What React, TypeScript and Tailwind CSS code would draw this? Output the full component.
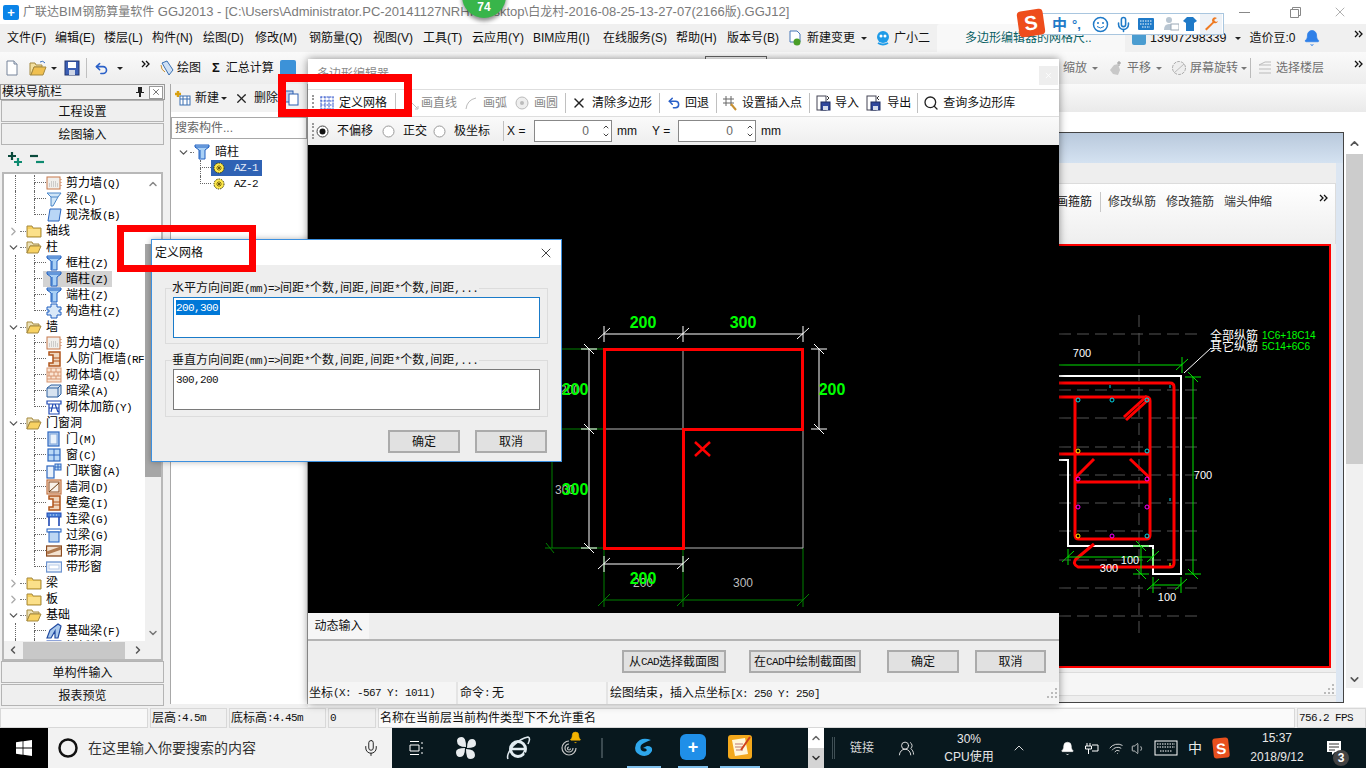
import React from "react";
import { X, Search, Mic, Bell, Volume1, Wifi, ChevronUp, ChevronDown, ChevronLeft, ChevronRight, Undo2, UsersRound } from "lucide-react";

const M = ({ t }: { t: string }) => (
  <>
    {t.split(/([\x00-\x7f]+)/).map((s, i) =>
      /^[\x00-\x7f]+$/.test(s) ? (
        <span key={i} className="font-['Liberation_Mono',monospace] text-[11px] tracking-[-0.6px]">{s}</span>
      ) : (
        <React.Fragment key={i}>{s}</React.Fragment>
      )
    )}
  </>
);

const Ico = ({ children, s = 16, vb = 16, className = "" }: { children: React.ReactNode; s?: number; vb?: number; className?: string }) => (
  <svg width={s} height={s} viewBox={`0 0 ${vb} ${vb}`} className={"shrink-0 block " + className}>{children}</svg>
);

const FolderClosed = () => (
  <Ico>
    <path d="M1 3h5l1 2h8v9H1z" fill="#f6cf5c" stroke="#a5893f" />
    <rect x="2" y="6" width="12" height="7" fill="#fbe08a" />
  </Ico>
);
const FolderOpen = () => (
  <Ico>
    <path d="M1 3h5l1 2h6v2H4l-3 7z" fill="#ede2b8" stroke="#a5893f" />
    <path d="M1 14l3-7h11l-3 7z" fill="#f8d263" stroke="#a5893f" />
  </Ico>
);
const TCol = () => (
  <Ico>
    <path d="M1 1h14v2l-4 3v9H5V6L1 3z" fill="#a9d0f5" stroke="#1f5fc0" />
    <path d="M6 6v8M1 3h14" stroke="#1f5fc0" fill="none" />
  </Ico>
);
const Wall = () => (
  <Ico>
    <rect x="1" y="2" width="13" height="12" fill="#f1efec" stroke="#c8784a" />
    <path d="M3 11h9M3 9h9M5 7h6" stroke="#a9a9a9" strokeDasharray="1 1" />
    <path d="M15 4v1M15 7v1M15 10v1" stroke="#c8784a" />
  </Ico>
);
const Beam = () => (
  <Ico>
    <path d="M1 2h14l-3 4-5 9H5V6z" fill="#cfe5f7" stroke="#4a86c8" />
    <path d="M5 6h7" stroke="#4a86c8" />
  </Ico>
);
const Slab = () => (
  <Ico><path d="M4 2h11l-2 12H2z" fill="#b9d6f6" stroke="#2c66bf" /></Ico>
);
const Puzzle = () => (
  <Ico>
    <path d="M5 1h6v3h4v3h-2v2h2v3h-4v3H5v-3H1V9h2V7H1V4h4z" fill="#d9e8f8" stroke="#1f5fc0" />
  </Ico>
);
const Jamb = () => (
  <Ico>
    <path d="M3 1h11v14H3v-3h4V4H3z" fill="#f0d7bf" stroke="#b0551c" strokeWidth="1.5" />
    <path d="M7 7h7M7 10h7" stroke="#b0551c" />
  </Ico>
);
const Brick = () => (
  <Ico>
    <rect x="1" y="1" width="14" height="14" fill="#fbe5d3" stroke="#d69570" />
    <path d="M1 5h14M1 9h14M1 12h14M5 1v4M10 1v4M3 5v4M8 5v4M12 5v4M5 9v3M10 9v3" stroke="#d69570" />
  </Ico>
);
const Box = () => (
  <Ico>
    <path d="M1 5l4-3h10v9l-3 3H1z" fill="#d7e3f0" stroke="#2c5f9e" />
    <path d="M1 5h11v9M12 5l3-3" stroke="#2c5f9e" fill="none" />
  </Ico>
);
const RebarBox = () => (
  <Ico>
    <path d="M1 2h14v3H1zM3 5v10h10V5M3 9h10M7 5l-2 8M9 5l3 8" fill="none" stroke="#1f49b4" strokeWidth="1.2" />
  </Ico>
);
const Door = () => (
  <Ico>
    <rect x="2" y="1" width="11" height="14" fill="#b9d2f2" stroke="#2c66bf" strokeWidth="1.2" />
    <rect x="4" y="3" width="7" height="10" fill="#eaf2fb" stroke="#7fa4d8" />
  </Ico>
);
const Win = () => (
  <Ico>
    <rect x="2" y="2" width="12" height="12" fill="#b9d9f6" stroke="#2c66bf" strokeWidth="1.2" />
    <path d="M8 2v12M2 8h12" stroke="#2c66bf" />
  </Ico>
);
const DoorWin = () => (
  <Ico>
    <rect x="1" y="3" width="7" height="12" fill="#eaf2fb" stroke="#2c66bf" strokeWidth="1.2" />
    <rect x="9" y="1" width="6" height="6" fill="#b9d9f6" stroke="#2c66bf" />
    <path d="M12 1v6M9 4h6" stroke="#2c66bf" />
  </Ico>
);
const Hole = () => (
  <Ico>
    <rect x="1" y="1" width="14" height="14" fill="#fbe5d3" stroke="#c07040" strokeWidth="1.2" />
    <rect x="3" y="3" width="10" height="10" fill="#f8f0e8" stroke="#8a4a20" />
    <path d="M3 13l10-9" stroke="#6a3a10" />
  </Ico>
);
const Lintel = () => (
  <Ico>
    <rect x="1" y="2" width="14" height="4" fill="#4f86d8" stroke="#1f49b4" />
    <path d="M3 6v9M13 6v9" stroke="#1f49b4" strokeWidth="1.6" />
    <path d="M4 4h1M7 4h1M10 4h1" stroke="#cfe0f8" />
  </Ico>
);
const Lintel2 = () => (
  <Ico>
    <rect x="1" y="2" width="14" height="3" fill="#fff" stroke="#1f5fc0" />
    <rect x="3" y="5" width="10" height="10" fill="#bcd6f3" stroke="#1f5fc0" />
  </Ico>
);
const StripHole = () => (
  <Ico>
    <rect x="0.5" y="3" width="15" height="10" fill="#f4e3d1" stroke="#8a4a20" strokeWidth="1.3" />
    <path d="M1 10l14-5" stroke="#b07a50" strokeWidth="3" />
  </Ico>
);
const StripWin = () => (
  <Ico>
    <rect x="0.5" y="3" width="15" height="10" fill="#f0f5fc" stroke="#6d94d0" strokeWidth="1.3" />
    <rect x="3" y="6" width="10" height="4" fill="#fff" stroke="#b7cbe8" />
  </Ico>
);
const BaseBeam = () => (
  <Ico>
    <path d="M1 15l3-8 8-6 3 2-3 12H9V8L5 15z" fill="#a9c8ec" stroke="#1f49a0" strokeWidth="1.2" />
  </Ico>
);
const Gear = () => (
  <Ico s={14} vb={14}>
    <circle cx="7" cy="7" r="5" fill="#ffe84a" stroke="#3a3a00" strokeWidth="1" strokeDasharray="1.5 1" />
    <path d="M4 7h6M7 4v6M5 5l4 4M9 5l-4 4" stroke="#554400" strokeWidth="0.7" />
  </Ico>
);

const Expander = ({ open }: { open: boolean }) =>
  open ? <ChevronDown size={13} strokeWidth={2.4} className="text-[#555]" /> : <ChevronRight size={13} strokeWidth={2.4} className="text-[#aaa]" />;

type Node =
  | { kind: "f"; label: string; open: boolean }
  | { kind: "c"; label: string; icon: React.ReactNode; last?: boolean; sel?: boolean };

const tree: Node[] = [
  { kind: "c", label: "剪力墙(Q)", icon: <Wall /> },
  { kind: "c", label: "梁(L)", icon: <Beam /> },
  { kind: "c", label: "现浇板(B)", icon: <Slab />, last: true },
  { kind: "f", label: "轴线", open: false },
  { kind: "f", label: "柱", open: true },
  { kind: "c", label: "框柱(Z)", icon: <TCol /> },
  { kind: "c", label: "暗柱(Z)", icon: <TCol />, sel: true },
  { kind: "c", label: "端柱(Z)", icon: <TCol /> },
  { kind: "c", label: "构造柱(Z)", icon: <Puzzle />, last: true },
  { kind: "f", label: "墙", open: true },
  { kind: "c", label: "剪力墙(Q)", icon: <Wall /> },
  { kind: "c", label: "人防门框墙(RF", icon: <Jamb /> },
  { kind: "c", label: "砌体墙(Q)", icon: <Brick /> },
  { kind: "c", label: "暗梁(A)", icon: <Box /> },
  { kind: "c", label: "砌体加筋(Y)", icon: <RebarBox />, last: true },
  { kind: "f", label: "门窗洞", open: true },
  { kind: "c", label: "门(M)", icon: <Door /> },
  { kind: "c", label: "窗(C)", icon: <Win /> },
  { kind: "c", label: "门联窗(A)", icon: <DoorWin /> },
  { kind: "c", label: "墙洞(D)", icon: <Hole /> },
  { kind: "c", label: "壁龛(I)", icon: <Jamb /> },
  { kind: "c", label: "连梁(G)", icon: <Lintel /> },
  { kind: "c", label: "过梁(G)", icon: <Lintel2 /> },
  { kind: "c", label: "带形洞", icon: <StripHole /> },
  { kind: "c", label: "带形窗", icon: <StripWin />, last: true },
  { kind: "f", label: "梁", open: false },
  { kind: "f", label: "板", open: false },
  { kind: "f", label: "基础", open: true },
  { kind: "c", label: "基础梁(F)", icon: <BaseBeam /> },
  { kind: "c", label: "筏板基础(M)", icon: <Lintel /> },
];

const FolderHolder = ({ open }: { open: boolean }) => (open ? <FolderOpen /> : <FolderClosed />);

const TreeRow = ({ n }: { n: Node }) => {
  if (n.kind === "f") {
    return (
      <div className="flex h-4 items-center">
        <div className="w-[3px] shrink-0" />
        <div className="w-[13px] shrink-0"><Expander open={n.open} /></div>
        <div className="w-[6px] shrink-0 border-b border-dotted border-[#777]" />
        <FolderHolder open={n.open} />
        <span className="ml-[4px] text-black"><M t={n.label} /></span>
      </div>
    );
  }
  return (
    <div className="flex h-4 items-center">
      <div className="w-[11px] shrink-0" />
      <div className="h-4 w-[19px] shrink-0 border-l border-dotted border-[#666]" />
      <div className="flex h-4 w-[12px] shrink-0 flex-col">
        <div className="h-2 border-b border-l border-dotted border-[#666]" />
        <div className={n.last ? "h-2" : "h-2 border-l border-dotted border-[#666]"} />
      </div>
      <div className={"-ml-[3px] flex h-4 items-center pl-[3px] pr-[4px] " + (n.sel ? "bg-[#d3d3d3]" : "")}>
        {n.icon}
        <span className="ml-[4px] whitespace-nowrap leading-4 text-black"><M t={n.label} /></span>
      </div>
    </div>
  );
};

const NavBtn = ({ t }: { t: string }) => (
  <div className="mx-px flex h-[22px] shrink-0 items-center justify-center border border-[#b4b4b4] bg-[#efefef] pt-px text-[#111]">{t}</div>
);

const Sep = ({ className = "" }: { className?: string }) => <div className={"h-5 w-px shrink-0 bg-[#c0c0c0] " + className} />;
const Grip = ({ className = "" }: { className?: string }) => <div className={"h-4 w-[2px] shrink-0 border-l-2 border-dotted border-[#999] " + className} />;

const BtnBox = ({ t, className }: { t: string; className: string }) => (
  <div className={"flex h-[23px] items-center justify-center border-2 border-[#ababab] bg-[#e1e1e1] text-[#111] " + className}><M t={t} /></div>
);

const Radio = ({ on, className = "" }: { on?: boolean; className?: string }) => (
  <Ico s={13} vb={13} className={className}>
    <circle cx="6.5" cy="6.5" r="5.5" fill="#fff" stroke={on ? "#444" : "#999"} />
    {on && <circle cx="6.5" cy="6.5" r="3" fill="#111" />}
  </Ico>
);

const Spin = ({ className = "" }: { className?: string }) => (
  <div className={"flex h-[22px] w-[78px] shrink-0 items-center justify-end border border-[#888] bg-white " + className}>
    <span className="mr-[13px] text-[12px] text-[#666]">0</span>
    <span className="mr-px flex flex-col text-[#444]">
      <ChevronUp size={8} strokeWidth={3} />
      <ChevronDown size={8} strokeWidth={3} />
    </span>
  </div>
);

const vt = (x: number, y: number) => `M${x} ${y - 8}V${y + 8}M${x - 6} ${y + 5}L${x + 6} ${y - 6}`;
const ht = (x: number, y: number) => `M${x - 8} ${y}H${x + 8}M${x - 5} ${y - 5}L${x + 5} ${y + 5}`;

const PolygonCanvas = () => (
  <svg viewBox="308 145 751 468" className="block h-[468px] w-[751px] bg-black">
    <g fill="none" stroke="#008000">
      <path d="M562 349H604M562 429H604M545 548H604M552 462V548M604 548V607M683 548V607M803 548V607M604 600H803" />
      <path d="M598 606l12-12M677 606l12-12M797 606l12-12M546 543l8 10" />
    </g>
    <path d="M683 349V429M604 429H683M803 429V548M683 548H803" stroke="#b5b5b5" fill="none" />
    <g stroke="#fff" fill="none">
      <path d="M604 334H803M589 349V548M819 349V429M604 564H683" />
      <path d={[vt(604, 334), vt(683, 334), vt(803, 334), vt(604, 564), vt(683, 564), ht(589, 349), ht(589, 429), ht(589, 548), ht(819, 349), ht(819, 429)].join("")} />
    </g>
    <g fontFamily="Liberation Sans, sans-serif" fontSize="12" fill="#bdbdbd" textAnchor="middle">
      <text x="643" y="587">200</text>
      <text x="743" y="587">300</text>
      <text x="565" y="494">300</text>
      <text x="570" y="394">200</text>
    </g>
    <g fontFamily="Liberation Sans, sans-serif" fontSize="16" fontWeight="700" fill="#00ff00" textAnchor="middle">
      <text x="643" y="328">200</text>
      <text x="743" y="328">300</text>
      <text x="575" y="395">200</text>
      <text x="575" y="495">300</text>
      <text x="832" y="395">200</text>
      <text x="643" y="584">200</text>
    </g>
    <path d="M604.5 349.5H802.5V429.5H683.5V548.5H604.5Z" fill="none" stroke="#ff0000" strokeWidth="3" />
    <path d="M695 442l15 14M710 442l-15 14" stroke="#ff0000" strokeWidth="2.5" />
  </svg>
);

const dots: [number, number, string][] = [
  [1078, 400, "#00d8e8"], [1112, 400, "#00d8e8"], [1147, 400, "#00d8e8"], [1147, 451, "#00d8e8"], [1078, 451, "#ffee00"],
  [1078, 479, "#ff00ff"], [1147, 479, "#ff00ff"], [1078, 507, "#ff00ff"], [1147, 507, "#ff00ff"], [1078, 536, "#ffee00"],
  [1112, 536, "#ff00ff"], [1147, 536, "#00d8e8"],
];

const MainCanvas = () => (
  <svg viewBox="1000 246 329 420" className="block h-[420px] w-[329px] bg-black">
    <g stroke="#555" strokeDasharray="12 6" fill="none">
      <path d="M1059 334H1200M1059 390H1200M1059 418H1200M1059 447H1200M1059 475H1200M1059 503H1200M1059 531H1200M1059 560H1200M1059 588H1200M1059 616H1200M1139 315V635" />
    </g>
    <path d="M1000 376H1181V574H1153V546H1068V460H1000" fill="none" stroke="#fff" strokeWidth="2" />
    <g fill="none" stroke="#ff0000" strokeWidth="3" strokeLinejoin="round">
      <path d="M1000 383H1170Q1174 383 1174 387V563Q1174 567 1170 567H1078Q1072 564 1076 559L1094 544" />
      <path d="M1000 397H1146Q1150 397 1150 401V535Q1150 539 1146 539H1079Q1075 539 1075 535V397" />
      <path d="M1000 454H1150M1075 482H1150M1150 398L1126 420M1147 396L1124 417M1075 478L1094 459M1150 478L1130 459" />
    </g>
    <g fill="none" strokeWidth="1">
      {dots.map(([x, y, c], i) => (
        <circle key={i} cx={x} cy={y} r="2" stroke={c} />
      ))}
    </g>
    <path d="M1110 385v3M1170 385v3M1170 498v3" stroke="#00d8e8" />
    <path d="M1170 563v3" stroke="#ffee00" />
    <g fill="none" stroke="#00e000">
      <path d="M1000 365H1182M1193 377V574M1153 585H1181M1068 557H1153M1141 546V574" />
      <path d={[vt(1182, 365), vt(1153, 585), vt(1181, 585), vt(1068, 557), vt(1153, 557), ht(1193, 377), ht(1193, 574), ht(1141, 546), ht(1141, 574)].join("")} />
    </g>
    <path d="M1184 373L1211 348" stroke="#fff" />
    <g fontFamily="Liberation Sans, sans-serif" fontSize="11" fill="#fff" textAnchor="middle">
      <text x="1082" y="357">700</text>
      <text x="1203" y="479">700</text>
      <text x="1167" y="601">100</text>
      <text x="1130" y="564">100</text>
      <text x="1109" y="572">300</text>
    </g>
    <g fontFamily="Noto Sans CJK SC, sans-serif" fontSize="12" fill="#fff">
      <text x="1210" y="340">全部纵筋</text>
      <text x="1210" y="351">其它纵筋</text>
    </g>
    <g fontFamily="Liberation Sans, sans-serif" fontSize="10" fill="#00ff00">
      <text x="1262" y="339">1C6+18C14</text>
      <text x="1262" y="350">5C14+6C6</text>
    </g>
  </svg>
);

const PageIcon = () => (
  <Ico>
    <path d="M3 1h7l3 3v11H3z" fill="#fff" stroke="#77849a" />
    <path d="M10 1v3h3" fill="#dfe6f0" stroke="#77849a" />
  </Ico>
);
const OpenIcon = () => (
  <Ico s={18} vb={18}>
    <path d="M1 4h5l1 2h6v2H5l-3 8H1z" fill="#f3e0a0" stroke="#a5893f" />
    <path d="M2 16l3-8h12l-3 8z" fill="#f0c050" stroke="#a5893f" />
    <path d="M11 3q3-2 5 1" fill="none" stroke="#3a70c0" />
  </Ico>
);
const SaveIcon = () => (
  <Ico>
    <rect x="1" y="1" width="14" height="14" fill="#3c5fb4" stroke="#23366f" />
    <rect x="4" y="2" width="8" height="6" fill="#fff" />
    <rect x="5" y="10" width="6" height="5" fill="#cfd6e6" />
  </Ico>
);
const Caret = ({ c = "#222", className = "" }: { c?: string; className?: string }) => (
  <Ico s={6} vb={6} className={className}><path d="M0 2h6L3 5z" fill={c} /></Ico>
);
const More = ({ className = "" }: { className?: string }) => (
  <Ico s={10} vb={10} className={className}><path d="M1 2l3 3-3 3M5 2l3 3-3 3" fill="none" stroke="#111" strokeWidth="1.3" /></Ico>
);
const GridIcon = () => (
  <Ico s={14} vb={14}>
    <path d="M0.5 1h13M0.5 5h13M0.5 9h13M0.5 13h13M1 0.5v13M5 0.5v13M9 0.5v13M13 0.5v13" stroke="#2b4fc8" strokeDasharray="2 1" />
  </Ico>
);
const FileIO = ({ dir }: { dir: boolean }) => (
  <Ico>
    <rect x="2" y="1" width="9" height="14" fill="#fff" stroke="#445" />
    <rect x="6" y="7" width="9" height="8" fill="#30479c" stroke="#1d2a60" />
    <rect x="8" y="11" width="5" height="4" fill="#d5dcec" />
    <path d={dir ? "M12 1l2 2-2 2" : "M14 1l-2 2 2 2"} stroke="#333" fill="none" />
  </Ico>
);

const Tb = ({ t, className = "" }: { t: string; className?: string }) => <span className={"shrink-0 whitespace-nowrap text-[#111] " + className}>{t}</span>;

const menu: [string, string][] = [
  ["文件(F)", "w-[48px]"], ["编辑(E)", "w-[49px]"], ["楼层(L)", "w-[48px]"], ["构件(N)", "w-[51px]"], ["绘图(D)", "w-[52px]"],
  ["修改(M)", "w-[54px]"], ["钢筋量(Q)", "w-[64px]"], ["视图(V)", "w-[50px]"], ["工具(T)", "w-[49px]"], ["云应用(Y)", "w-[61px]"],
  ["BIM应用(I)", "w-[70px]"], ["在线服务(S)", "w-[73px]"], ["帮助(H)", "w-[51px]"], ["版本号(B)", "w-[60px]"],
];

const Taskbar = () => (
  <div className="flex h-[40px] shrink-0 items-stretch bg-[#08181e] text-[#e8e8e8]">
    <div className="flex w-[48px] shrink-0 items-center justify-center bg-black">
      <Ico s={16} vb={16}><path d="M0 2.2L6.6 1.3V7.6H0zM7.4 1.2L16 0V7.6H7.4zM0 8.4H6.6V14.7L0 13.8zM7.4 8.4H16V16L7.4 14.8z" fill="#fff" /></Ico>
    </div>
    <div className="flex w-[344px] shrink-0 items-center bg-[#f2f2f2] pl-[9px] text-[14px] text-[#333]">
      <Ico s={22} vb={22}><circle cx="11" cy="11" r="8.5" fill="none" stroke="#111" strokeWidth="2.5" /></Ico>
      <span className="ml-[9px]">在这里输入你要搜索的内容</span>
      <Mic size={18} strokeWidth={1.3} className="ml-auto mr-[12px] text-[#222]" />
    </div>
    <div className="flex w-[48px] shrink-0 items-center justify-center">
      <Ico s={16} vb={16}><path d="M2 1.5h9M2 14.5h9M2 5h9v6H2zM14 2v2M14 7v2M14 12v2" fill="none" stroke="#fff" /></Ico>
    </div>
    <div className="flex w-[52px] shrink-0 items-center justify-center">
      <Ico s={24} vb={24}>
        <g fill="#e8ecef"><path d="M12 11Q3 11 3 5q0-4 5-4 4 0 4 10zM13 12q0-9 5-9 4 0 4 5 0 4-9 4zM12 13q9 0 9 6 0 4-5 4-4 0-4-10zM11 12q0 9-5 9-4 0-4-5 0-4 9-4z" /></g>
      </Ico>
    </div>
    <div className="flex w-[52px] shrink-0 items-center justify-center">
      <Ico s={26} vb={26}>
        <path d="M3 24Q1 20 8 11 16 3 23 2q3 1 0 7" fill="none" stroke="#dfe8ee" strokeWidth="1.6" />
        <circle cx="13" cy="14" r="7.500" fill="none" stroke="#e3edf2" strokeWidth="3" />
        <path d="M6 14h14" stroke="#e3edf2" strokeWidth="2.500" />
        <path d="M19 17l4 2-3 2z" fill="#08181e" />
      </Ico>
    </div>
    <div className="relative flex w-[50px] shrink-0 items-center justify-center">
      <Ico s={18} vb={18}><path d="M9 2a7 7 0 1 0 7 7M9 5a4 4 0 1 0 4 4M9 8a1.5 1.5 0 1 0 1.5 1.5" fill="none" stroke="#c8c8c8" strokeWidth="1.2" /></Ico>
      <Bell size={13} fill="#f5b400" strokeWidth={1} className="absolute right-[12px] top-[3px] text-[#f5b400]" />
    </div>
    <div className="my-[10px] ml-[7px] mr-[16px] w-[2px] shrink-0 bg-[#3b4a50]" />
    <div className="flex w-[50px] shrink-0 flex-col items-center">
      <div className="flex flex-1 items-center">
        <Ico s={26} vb={26}><path d="M20 6Q10 2 5 10q-3 8 4 11 8 3 12-4 1-5-5-5l-4 2q3 0 4 2-2 3-6 0-2-5 3-7 4-2 7-3z" fill="#2ea7ec" /></Ico>
      </div>
      <div className="h-[2px] w-[34px] bg-[#80c0ec]" />
    </div>
    <div className="flex w-[48px] shrink-0 flex-col items-center">
      <div className="flex flex-1 items-center">
        <div className="flex h-[26px] w-[26px] items-center justify-center rounded-[6px] bg-[#1f8fe8] text-[18px] font-bold leading-none text-white">+</div>
      </div>
      <div className="h-[2px] w-[30px] bg-[#80c0ec]" />
    </div>
    <div className="flex w-[46px] shrink-0 flex-col items-center">
      <div className="flex flex-1 items-center">
        <Ico s={26} vb={26}>
          <rect x="1" y="1" width="24" height="24" rx="3" fill="#f3a81c" />
          <path d="M5 6l13-2 3 16-13 2z" fill="#fff6da" />
          <path d="M8 10h8M8 13h8M9 16h7" stroke="#b77" />
          <path d="M14 16L23 3" stroke="#d0401c" strokeWidth="2" />
        </Ico>
      </div>
      <div className="h-[2px] w-[40px] bg-[#80c0ec]" />
    </div>
    <div className="w-[45px] shrink-0" />
    <div className="flex w-[16px] shrink-0 flex-col">
      <div className="flex flex-1 items-center justify-center bg-white text-[#666]"><ChevronUp size={12} strokeWidth={3} /></div>
      <div className="flex flex-1 items-center justify-center bg-[#d4d4d4] text-[#333]"><ChevronDown size={12} strokeWidth={3} /></div>
    </div>
    <div className="flex w-[19px] shrink-0 items-center justify-center"><div className="h-[22px] w-[3px] border-x border-[#3f4f55]" /></div>
    <div className="flex w-[38px] shrink-0 items-center justify-start pl-[7px] text-[12px] text-[#d8d8d8]">链接</div>
    <div className="flex w-[50px] shrink-0 items-center justify-center"><UsersRound size={17} strokeWidth={1.3} /></div>
    <div className="flex w-[76px] shrink-0 flex-col items-center justify-center text-[12px] leading-[18px]"><span>30%</span><span>CPU使用</span></div>
    <div className="flex w-[24px] shrink-0 items-center justify-center"><ChevronUp size={16} strokeWidth={1.4} /></div>
    <div className="w-[24px] shrink-0" />
    <div className="flex w-[24px] shrink-0 items-center justify-center"><Bell size={15} fill="#fff" strokeWidth={1} /></div>
    <div className="flex w-[24px] shrink-0 items-center justify-center">
      <Ico s={18} vb={18}><path d="M5 4v3M8 4v3M3.500 7h6v3h-6zM6.500 10v5M10 6h6v6h-6" fill="none" stroke="#fff" /></Ico>
    </div>
    <div className="flex w-[26px] shrink-0 items-center justify-center"><Wifi size={15} strokeWidth={1.3} className="-rotate-12" /></div>
    <div className="flex w-[18px] shrink-0 items-center justify-center"><Volume1 size={15} strokeWidth={1.3} /></div>
    <div className="flex w-[38px] shrink-0 items-center justify-center">
      <Ico s={24} vb={24}><rect x="1" y="5" width="22" height="14" fill="none" stroke="#fff" /><path d="M3 8h18M3 11h18M6 15h12" stroke="#fff" strokeDasharray="1.500 1" /></Ico>
    </div>
    <div className="flex w-[20px] shrink-0 items-center justify-center text-[14px]">中</div>
    <div className="flex w-[32px] shrink-0 items-center justify-center">
      <div className="flex h-[20px] w-[16px] -rotate-6 items-center justify-center rounded-[3px] bg-[#e8501e] text-[15px] font-bold leading-none text-white">S</div>
    </div>
    <div className="flex w-[80px] shrink-0 flex-col items-center justify-center text-[12px] leading-[19px] text-[#e8e8e8]"><span>15:37</span><span>2018/9/12</span></div>
    <div className="relative flex w-[34px] shrink-0 items-center justify-center">
      <Ico s={16} vb={16}><path d="M1 1h14v11H9l-3 3v-3H1z" fill="#fff" /><path d="M3 4h10M3 7h10M3 10h6" stroke="#333" /></Ico>
      <div className="absolute bottom-[2px] right-[2px] flex h-[16px] w-[16px] items-center justify-center rounded-full bg-[#444] text-[12px] font-bold leading-none text-white">3</div>
    </div>
  </div>
);

export default function App() {
  return (
    <div className="relative flex h-[768px] w-[1366px] flex-col overflow-hidden bg-white font-['Liberation_Sans','Noto_Sans_CJK_SC',sans-serif] text-[12px] leading-4 text-[#111]">
      {/* title bar */}
      <div className="flex h-[24px] shrink-0 items-center bg-white">
        <div className="ml-[3px] flex h-[15px] w-[16px] items-center justify-center rounded-[2px] bg-[#0a84e8] text-[13px] font-bold leading-none text-white">+</div>
        <span className="ml-[4px] whitespace-nowrap text-[13px] text-[#7a7a7a]">
          <span className="text-[12px]">广联达</span>BIM<span className="text-[12px]">钢筋算量软件</span> GGJ2013 - [C:\Users\Administrator.PC-20141127NRHI\Desktop\<span className="text-[12px]">白龙村</span>-2016-08-25-13-27-07(2166<span className="text-[12px]">版</span>).GGJ12]
        </span>
        <div className="ml-auto mr-[18px] flex items-center text-[#888]">
          <div className="h-px w-[11px] bg-[#888]" />
          <Ico s={11} vb={11} className="ml-[40px]"><path d="M2.500 2.500V.5h8v8h-2M.5 2.500h8v8h-8z" fill="none" stroke="#888" /></Ico>
          <X size={16} strokeWidth={1} className="ml-[31px]" />
        </div>
      </div>

      {/* menu bar */}
      <div className="flex h-[28px] shrink-0 items-center bg-[#f0f0f0] pl-[7px]">
        <div className="flex items-center whitespace-nowrap">
          {menu.map(([m, w]) => (
            <span key={m} className={w}>{m}</span>
          ))}
        </div>
        <span><Ico s={16} vb={16}><path d="M3 1h7l3 3v8H3z" fill="#fff" stroke="#4878b8" /><circle cx="10" cy="12" r="3.500" fill="#4a9e28" /></Ico></span>
        <span className="ml-[4px] whitespace-nowrap">新建变更</span>
        <Caret className="ml-[6px]" />
        <span className="ml-[8px]">
          <Ico s={16} vb={16}><circle cx="8" cy="7" r="6" fill="#1e9be8" /><circle cx="6" cy="6" r="1.500" fill="#fff" /><circle cx="10" cy="6" r="1.500" fill="#fff" /><path d="M3 13q5 3 10 0" stroke="#1e9be8" strokeWidth="2" fill="none" /></Ico>
        </span>
        <span className="ml-[3px] whitespace-nowrap">广小二</span>
        <div className="ml-[7px] flex h-[28px] w-[188px] shrink-0 items-center rounded-t-[3px] bg-[#f8f8f8] pl-[28px] text-[#0a5f64]">多边形编辑器的网格尺..</div>
        <div className="ml-[7px] flex h-[13px] w-[14px] shrink-0 items-center justify-center rounded-[2px] bg-[#4a9cd0]" />
        <span className="ml-[4px] text-[12.500px]">13907298339</span>
        <Caret className="ml-[8px]" />
        <span className="ml-[9px] whitespace-nowrap">造价豆:0</span>
        <Bell size={18} fill="#2f80e8" strokeWidth={1} className="ml-[7px] text-[#2f80e8]" />
        <More className="mb-[8px] ml-auto mr-[2px]" />
      </div>

      {/* tool bar */}
      <div className="flex h-[32px] shrink-0 items-center bg-gradient-to-b from-[#fafafa] to-[#ededed] pl-[4px]">
        <PageIcon />
        <div className="ml-[9px]"><OpenIcon /></div>
        <Caret className="ml-[4px]" />
        <div className="ml-[7px]"><SaveIcon /></div>
        <Sep className="ml-[6px]" />
        <Undo2 size={15} strokeWidth={2.6} className="ml-[7px] text-[#2a60c8]" />
        <Caret className="ml-[8px]" />
        <More className="mb-[8px] ml-[18px]" />
        <div className="ml-[8px]">
          <Ico s={17} vb={17}><path d="M3 3l5-2 6 9-4 5z" fill="#cfe0f4" stroke="#3a6fb0" /><path d="M2 5q0 5 4 7" stroke="#c89030" fill="none" /></Ico>
        </div>
        <span className="ml-[1px]">绘图</span>
        <span className="ml-[11px] text-[13px] font-bold">Σ</span>
        <span className="ml-[6px]">汇总计算</span>
        <div className="ml-[6px] h-[16px] w-[16px] rounded-[2px] bg-[#3c92d8]" />
        <div className="ml-auto flex items-center text-[#707070]">
          <span>缩放</span>
          <Caret c="#777" className="ml-[5px]" />
          <Ico s={16} vb={16} className="ml-[10px]"><path d="M6 5l4-1 2 6-2 5-5-1-3-4z" fill="#c8c8c8" /><path d="M11 1v5M9 3h4" stroke="#999" /></Ico>
          <span className="ml-[3px]">平移</span>
          <Caret c="#777" className="ml-[5px]" />
          <Ico s={16} vb={16} className="ml-[9px]"><circle cx="8" cy="8" r="6.500" fill="#eee" stroke="#aaa" strokeDasharray="3 1" /><path d="M3 13L13 4" stroke="#bbb" /></Ico>
          <span className="ml-[3px]">屏幕旋转</span>
          <Caret c="#777" className="ml-[3px]" />
          <div className="ml-[3px] h-5 w-px bg-[#bbb]" />
          <Ico s={14} vb={14} className="ml-[7px]"><path d="M1 4l6-3h6M1 4h12M1 8h12M1 12h12" stroke="#bbb" fill="none" /></Ico>
          <span className="ml-[4px]">选择楼层</span>
          <div className="w-[30px]" />
          <More className="mb-[8px] mr-[2px]" />
        </div>
      </div>

      {/* main */}
      <div className="flex h-[623px] shrink-0 bg-[#f0f0f0]">
        {/* nav */}
        <div className="flex w-[165px] shrink-0 flex-col">
          <div className="flex h-4 shrink-0 items-center justify-between border border-[#9a9a9a] pl-px leading-none">
            <span>模块导航栏</span>
            <div className="flex items-center">
              <span className="mr-[4px]"><Ico s={10} vb={10}><path d="M3 0h4v5h2v1H6v4H4V6H1V5h2z" fill="#222" /></Ico></span>
              <div className="mr-px flex h-[13px] w-[14px] items-center justify-center border border-[#999] bg-white"><X size={10} strokeWidth={1.4} /></div>
            </div>
          </div>
          <NavBtn t="工程设置" />
          <div className="h-px shrink-0" />
          <NavBtn t="绘图输入" />
          <div className="flex h-[27px] shrink-0 items-start pl-[7px] pt-[6px]">
            <Ico s={16} vb={16}><path d="M5 1v8M1 5h8" stroke="#0b4a3c" strokeWidth="2.200" /><path d="M11 7v8M7 11h8" stroke="#0e8a70" strokeWidth="2.200" /></Ico>
            <Ico s={16} vb={16} className="ml-[6px]"><path d="M1 5h8" stroke="#0b4a3c" strokeWidth="2.200" /><path d="M7 11h8" stroke="#0e8a70" strokeWidth="2.200" /></Ico>
          </div>
          <div className="mx-[2px] flex h-[489px] shrink-0 flex-col border-2 border-[#b8b8b8] bg-white">
            <div className="flex min-h-0 flex-1">
              <div className="min-w-0 flex-1 overflow-hidden pt-px">
                {tree.map((n, i) => (
                  <TreeRow key={i} n={n} />
                ))}
              </div>
              <div className="flex w-[16px] shrink-0 flex-col items-center bg-[#f0f0f0]">
                <div className="flex h-[20px] w-full items-center justify-center bg-white text-[#888]"><ChevronUp size={12} strokeWidth={3} /></div>
                <div className="h-[50px] w-full bg-white" />
                <div className="h-[233px] w-full bg-[#a6a6a6]" />
                <div className="mt-auto flex h-[16px] w-full items-center justify-center text-[#777]"><ChevronDown size={12} strokeWidth={3} /></div>
              </div>
            </div>
            <div className="flex h-[18px] shrink-0 items-center bg-[#f0f0f0] pl-[3px] text-[#555]">
              <ChevronLeft size={12} strokeWidth={3} />
              <div className="ml-[4px] h-[17px] w-[102px] bg-[#c8c8c8]" />
              <ChevronRight size={12} strokeWidth={3} className="ml-[7px]" />
            </div>
          </div>
          <NavBtn t="单构件输入" />
          <div className="h-px shrink-0" />
          <NavBtn t="报表预览" />
        </div>

        {/* component list */}
        <div className="ml-[5px] flex h-[620px] w-[138px] shrink-0 flex-col border-l border-r border-[#a8a8a8] bg-white">
          <div className="flex h-[28px] shrink-0 items-center bg-[#f2f2f2] pl-[3px]">
            <Ico s={18} vb={18}><path d="M4 2v6M1 5h6" stroke="#d8a010" strokeWidth="2.500" /><rect x="6" y="7" width="10" height="9" fill="#fff" stroke="#3a6fb0" /><path d="M6 10h10M9 7v9M13 7v9" stroke="#3a6fb0" /></Ico>
            <span className="ml-[3px]">新建</span>
            <Caret className="ml-[2px]" />
            <X size={15} strokeWidth={2} className="ml-[7px] text-[#222]" />
            <span className="ml-[5px]">删除</span>
            <Ico s={16} vb={16} className="ml-[5px]"><rect x="1" y="1" width="9" height="11" fill="#bcd0ec" stroke="#2c5fb0" /><rect x="6" y="4" width="9" height="11" fill="#fff" stroke="#2c5fb0" /></Ico>
          </div>
          <div className="mt-[5px] flex h-[22px] shrink-0 items-center border border-[#a8a8a8] bg-white pl-[3px] text-[#666]">搜索构件...</div>
          <div className="mt-[4px] pt-[1px]">
            <div className="flex h-4 items-center pl-[6px]">
              <div className="w-[13px] shrink-0"><Expander open /></div>
              <div className="w-[4px] shrink-0 border-b border-dotted border-[#777]" />
              <TCol />
              <span className="ml-[5px]">暗柱</span>
            </div>
            <div className="flex h-4 items-center pl-[29px]">
              <div className="flex h-4 w-[11px] flex-col"><div className="h-2 border-b border-l border-dotted border-[#666]" /><div className="h-2 border-l border-dotted border-[#666]" /></div>
              <div className="flex h-4 w-[51px] items-center bg-[#2f62b4] pl-px text-[#e6edf8]">
                <Gear />
                <span className="ml-[8px] font-['Liberation_Mono',monospace] text-[11px] tracking-[-0.6px]">AZ-1</span>
              </div>
            </div>
            <div className="flex h-4 items-center pl-[29px]">
              <div className="flex h-4 w-[11px] flex-col"><div className="h-2 border-b border-l border-dotted border-[#666]" /><div className="h-2" /></div>
              <div className="flex h-4 items-center pl-px">
                <Gear />
                <span className="ml-[8px] font-['Liberation_Mono',monospace] text-[11px] tracking-[-0.6px]">AZ-2</span>
              </div>
            </div>
          </div>
        </div>

        {/* workspace */}
        <div className="flex min-w-0 flex-1 flex-col bg-white">
          <div className="h-[28px] shrink-0 bg-gradient-to-b from-[#fafafa] to-[#eaeaea]" />
          <div className="h-[20px] shrink-0 bg-white" />
          <div className="flex h-[571px] shrink-0 items-start">
            <div className="flex h-[571px] w-[1036px] shrink-0 flex-col border-b border-r border-t border-[#444] bg-[#dce6f2]">
              <div className="h-[30px] shrink-0 bg-gradient-to-b from-[#b9c9dc] to-[#d4e2f1]" />
              <div className="mr-[7px] flex min-h-0 flex-1 flex-col bg-[#eeeeee]">
                <div className="h-[20px] shrink-0" />
                <div className="flex h-[61px] shrink-0 items-start justify-end border-r border-t border-[#dcdcdc] bg-gradient-to-b from-white to-[#eeeeee] pr-[6px] pt-[8px]">
                  <span className="flex items-center">
                    <span className="mr-[8px]">画箍筋</span>
                    <span className="mr-[7px] h-5 w-px bg-[#c8c8c8]" />
                    <span className="mr-[10px] text-[#333]">修改纵筋</span>
                    <span className="mr-[10px] text-[#333]">修改箍筋</span>
                    <span className="mr-[47px] text-[#333]">端头伸缩</span>
                    <More className="mb-[8px]" />
                  </span>
                </div>
                <div className="mr-[5px] flex h-[424px] shrink-0 justify-end border-2 border-[#ff0000] bg-black">
                  <MainCanvas />
                </div>
                <div className="mt-[4px] flex h-[24px] shrink-0 items-end justify-end border-y border-[#dcdcdc] bg-[#f6f6f6] pb-[1px] pr-[2px]">
                  <Ico s={10} vb={10}><path d="M8 0h2v2H8zM4 4h2v2H4zM8 4h2v2H8zM0 8h2v2H0zM4 8h2v2H4zM8 8h2v2H8z" fill="#bbb" /></Ico>
                </div>
              </div>
            </div>
            <div className="ml-[2px] flex h-[556px] w-[17px] shrink-0 flex-col bg-[#f0f0f0]">
              <div className="flex h-[22px] shrink-0 items-center justify-center bg-white text-[#555]"><ChevronUp size={13} strokeWidth={3} /></div>
              <div className="h-[310px] shrink-0 bg-[#cccccc]" />
              <div className="mt-auto flex h-[18px] items-center justify-center text-[#555]"><ChevronDown size={13} strokeWidth={3} /></div>
            </div>
          </div>
        </div>
      </div>

      {/* status bar */}
      <div className="flex h-[21px] shrink-0 items-stretch gap-[2px] bg-[#f0f0f0] pt-px">
        <div className="w-[148px] border border-[#d8d8d8] bg-[#f8f8f8]" />
        <div className="flex w-[77px] items-center border border-[#d8d8d8] pl-px"><M t="层高:4.5m" /></div>
        <div className="flex w-[97px] items-center border border-[#d8d8d8] pl-px"><M t="底标高:4.45m" /></div>
        <div className="flex w-[48px] items-center border border-[#d8d8d8] pl-px"><M t="0" /></div>
        <div className="flex min-w-0 flex-1 items-center border border-[#d8d8d8] bg-[#fafafa] pl-px">名称在当前层当前构件类型下不允许重名</div>
        <div className="flex w-[69px] items-center border border-[#d8d8d8] pl-px"><M t="756.2 FPS" /></div>
      </div>

      <Taskbar />

      {/* window sliver above editor */}
      <div className="absolute left-[705px] top-[56px] h-[3px] w-[62px] border-x border-t border-[#666] bg-white" />

      {/* polygon editor window */}
      <div className="absolute left-[308px] top-[59px] flex h-[645px] w-[751px] flex-col bg-white shadow-[0_0_8px_rgba(0,0,0,0.45)]">
        <div className="flex h-[30px] shrink-0 items-start bg-white pl-[9px] pt-[7px] text-[#8a8a8a]">
          多边形编辑器
          <div className="ml-auto mr-px flex h-[19px] w-[19px] items-center justify-center bg-[#eeeeee] text-white"><X size={9} /></div>
        </div>
        <div className="flex h-[28px] shrink-0 items-center border-b border-t border-[#dedede] bg-white">
          <Grip className="ml-[4px]" />
          <div className="ml-[6px]"><GridIcon /></div>
          <Tb t="定义网格" className="ml-[5px]" />
          <Sep className="ml-[8px]" />
          <Ico s={14} vb={14} className="ml-[9px]"><path d="M1 1l11 11M10 13h3v-3" stroke="#bbb" fill="none" /></Ico>
          <Tb t="画直线" className="ml-[2px] !text-[#888]" />
          <Ico s={14} vb={14} className="ml-[7px]"><path d="M2 13Q3 4 12 2" stroke="#bbb" fill="none" /></Ico>
          <Tb t="画弧" className="ml-[5px] !text-[#888]" />
          <Ico s={14} vb={14} className="ml-[8px]"><circle cx="7" cy="7" r="6" fill="#eee" stroke="#bbb" /><circle cx="7" cy="7" r="2" fill="#bbb" /></Ico>
          <Tb t="画圆" className="ml-[5px] !text-[#888]" />
          <Sep className="ml-[7px]" />
          <X size={16} strokeWidth={2.200} className="ml-[5px] text-[#222]" />
          <Tb t="清除多边形" className="ml-[5px]" />
          <Sep className="ml-[7px]" />
          <Undo2 size={14} strokeWidth={2.600} className="ml-[7px] text-[#2a60c8]" />
          <Tb t="回退" className="ml-[4px]" />
          <Sep className="ml-[7px]" />
          <Ico s={16} vb={16} className="ml-[5px]"><path d="M4 1v10M9 1v10M1 4h11M1 8h11" stroke="#666" /><path d="M9 9l5 6" stroke="#c89030" strokeWidth="2" /></Ico>
          <Tb t="设置插入点" className="ml-[4px]" />
          <Sep className="ml-[7px]" />
          <div className="ml-[5px]"><FileIO dir /></div>
          <Tb t="导入" className="ml-[4px]" />
          <div className="ml-[6px]"><FileIO dir={false} /></div>
          <Tb t="导出" className="ml-[6px]" />
          <Sep className="ml-[6px]" />
          <Search size={16} strokeWidth={2} className="ml-[5px] text-[#222]" />
          <Tb t="查询多边形库" className="ml-[4px]" />
        </div>
        <div className="flex h-[28px] shrink-0 items-center bg-gradient-to-b from-[#fafafa] to-[#eeeeee]">
          <Grip className="ml-[4px]" />
          <Radio on className="ml-[2px]" />
          <Tb t="不偏移" className="ml-[8px]" />
          <Radio className="ml-[9px]" />
          <Tb t="正交" className="ml-[8px]" />
          <Radio className="ml-[6px]" />
          <Tb t="极坐标" className="ml-[8px]" />
          <Sep className="ml-[13px]" />
          <span className="ml-[3px] w-[18px] shrink-0 whitespace-nowrap">X =</span>
          <Spin className="ml-[9px]" />
          <span className="ml-[5px] w-[22px] shrink-0">mm</span>
          <span className="ml-[13px] w-[18px] shrink-0 whitespace-nowrap">Y =</span>
          <Spin className="ml-[8px]" />
          <span className="ml-[5px]">mm</span>
        </div>
        <div className="h-[468px] shrink-0 bg-black"><PolygonCanvas /></div>
        <div className="flex h-[28px] shrink-0 items-end border-b-2 border-[#b4b4b4] bg-[#eeeeee]">
          <div className="flex h-[26px] w-[61px] items-center justify-center bg-[#f6f6f6]">动态输入</div>
        </div>
        <div className="flex h-[41px] shrink-0 items-center bg-[#eeeeee] pl-[314px]">
          <BtnBox t="从CAD选择截面图" className="w-[104px]" />
          <BtnBox t="在CAD中绘制截面图" className="ml-[23px] w-[112px]" />
          <BtnBox t="确定" className="ml-[26px] w-[72px]" />
          <BtnBox t="取消" className="ml-[16px] w-[71px]" />
        </div>
        <div className="flex min-h-0 flex-1 items-stretch gap-[2px] bg-[#e4e4e4]">
          <div className="flex w-[148px] items-center bg-[#f5f5f5] pl-px"><M t="坐标 (X: -567 Y: 1011)" /></div>
          <div className="flex w-[148px] items-center bg-[#f5f5f5] pl-[2px]"><M t="命令:" /><span className="ml-[2px]">无</span></div>
          <div className="flex flex-1 items-center justify-between bg-[#f5f5f5] px-[2px]">
            <span><M t="绘图结束，插入点坐标[X: 250 Y: 250]" /></span>
            <Ico s={10} vb={10}><path d="M8 0h2v2H8zM4 4h2v2H4zM8 4h2v2H8zM0 8h2v2H0zM4 8h2v2H4zM8 8h2v2H8z" fill="#bbb" /></Ico>
          </div>
        </div>
      </div>

      {/* grid dialog */}
      <div className="absolute left-[151px] top-[239px] flex h-[223px] w-[411px] flex-col border border-[#3b90e0] bg-[#eeeeee] shadow-[0_0_6px_rgba(0,0,0,0.3)]">
        <div className="flex h-[25px] shrink-0 items-center justify-between bg-white pl-[3px] pr-[7px]">
          <span className="text-[#111]">定义网格</span>
          <X size={16} strokeWidth={1.200} />
        </div>
        <fieldset className="mx-[13px] mt-[15px] h-[64px] border border-[#dcdcdc] px-[7px]">
          <legend className="ml-[-1px] whitespace-nowrap bg-[#eeeeee] pr-px text-[#111]"><M t="水平方向间距(mm)=>间距*个数,间距,间距*个数,间距,..." /></legend>
          <div className="h-[41px] border border-[#1a7bc9] bg-white pl-[2px] pt-[2px]"><span className="block w-[44px] bg-[#0078d7] leading-[14px] text-white"><M t="200,300" /></span></div>
        </fieldset>
        <fieldset className="mx-[13px] mt-[8px] h-[65px] border border-[#dcdcdc] px-[7px]">
          <legend className="ml-[-1px] whitespace-nowrap bg-[#eeeeee] pr-px text-[#111]"><M t="垂直方向间距(mm)=>间距*个数,间距,间距*个数,间距,..." /></legend>
          <div className="h-[41px] border border-[#7a7a7a] bg-white pl-[2px] pt-[2px] leading-[14px]"><M t="300,200" /></div>
        </fieldset>
        <div className="mt-[13px] flex justify-end pr-[14px]">
          <BtnBox t="确定" className="w-[72px]" />
          <BtnBox t="取消" className="ml-[15px] w-[72px]" />
        </div>
      </div>

      {/* red annotation rectangles */}
      <div className="absolute left-[278px] top-[74px] h-[43px] w-[134px] border-[8px] border-[#ff0000]" />
      <div className="absolute left-[117px] top-[225px] h-[47px] w-[139px] border-[7px] border-[#ff0000]" />

      {/* floating badge */}
      <div className="absolute left-[462px] top-[-26px] flex h-[44px] w-[44px] items-end justify-center rounded-full bg-[#38b54a] pb-[3px] text-[12px] font-bold text-white shadow-[0_3px_4px_rgba(0,0,0,0.45)]">74</div>

      {/* sogou input bar */}
      <div className="absolute left-[1040px] top-[13px] flex h-[22px] w-[184px] items-center border border-[#a9c6df] bg-white pl-[11px] text-[#1f7ac8]">
        <span className="w-[17px] text-[15px] font-bold leading-none">中</span>
        <span className="ml-[3px] w-[20px] text-[13px] font-bold leading-none">°,</span>
        <Ico s={17} vb={17}><circle cx="8.500" cy="8.500" r="7" fill="#fff" stroke="#1f7ac8" strokeWidth="1.500" /><circle cx="6" cy="7" r="1" fill="#1f7ac8" /><circle cx="11" cy="7" r="1" fill="#1f7ac8" /><path d="M5 10.500q3.500 3 7 0" fill="none" stroke="#1f7ac8" /></Ico>
        <Mic size={17} strokeWidth={2.200} className="ml-[6px]" />
        <Ico s={16} vb={16} className="ml-[6px]"><rect x="0" y="2" width="16" height="12" rx="1" fill="#1f7ac8" /><path d="M2 5h12M2 8h12M4 11h8" stroke="#fff" strokeDasharray="1.500 1" /></Ico>
        <Ico s={16} vb={16} className="ml-[9px]"><circle cx="6" cy="4" r="3" fill="#b9c6d2" /><path d="M1 14q0-6 5-6t5 3v3z" fill="#b9c6d2" /><rect x="8" y="8" width="8" height="6" fill="#fff" stroke="#9aa8b5" /></Ico>
        <Ico s={16} vb={16} className="ml-[3px]"><path d="M5 1h6l4 4-3 2v8H4V7L1 5z" fill="#1f7ac8" /></Ico>
        <div className="ml-[2px] flex h-[20px] w-[22px] items-center justify-center bg-[#eef2f7]">
          <Ico s={16} vb={16}><path d="M14 2q-4-2-5 2 0 1 .5 2L2 13l1.500 1.500L11 7q3 1 4-2l-2 1-2-2z" fill="#ef7a22" /></Ico>
        </div>
      </div>
      <div className="absolute left-[1018px] top-[10px] flex h-[26px] w-[26px] rotate-[-8deg] items-center justify-center rounded-[4px] bg-[#ee4d1c] text-[20px] font-bold leading-none text-white">S</div>
    </div>
  );
}
